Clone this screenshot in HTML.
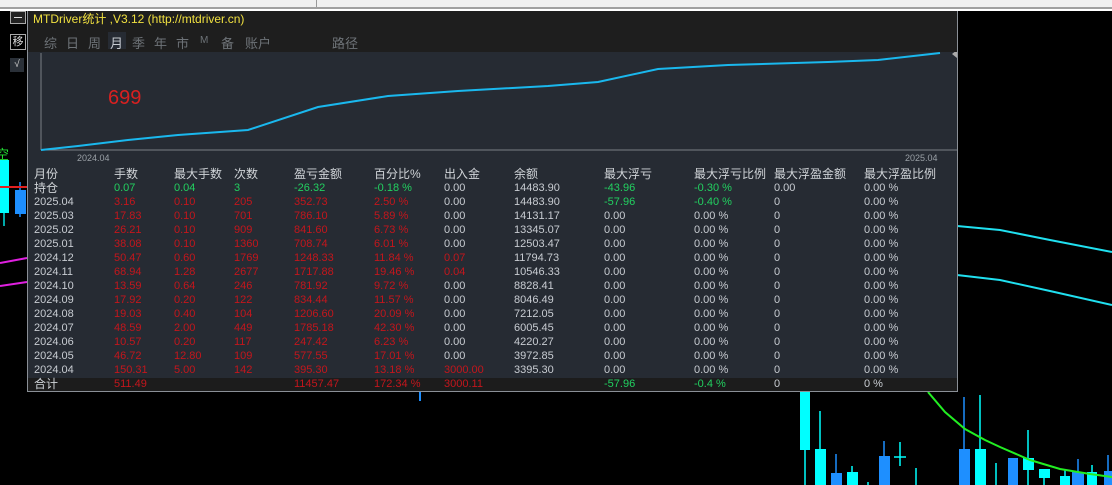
<!DOCTYPE html>
<html><head><meta charset="utf-8"><style>
html,body{margin:0;padding:0;width:1112px;height:485px;overflow:hidden;background:#000;font-family:"Liberation Sans","Noto Sans CJK SC",sans-serif;}
.abs{position:absolute;}
#top{left:0;top:0;width:1112px;height:7px;background:#f0f0f0;}
#top2{left:0;top:7px;width:1112px;height:2px;background:#a0a0a0;}
#top3{left:0;top:9px;width:1112px;height:2px;background:#fff;}
#panel{left:27px;top:11px;width:929px;height:380px;background:#262b33;border:1px solid #8a8f96;border-top:none;}
#head{left:0;top:0;width:929px;height:41px;background:#1e1e1e;}
.t{position:absolute;font-size:11px;white-space:nowrap;line-height:13px;}
.h{font-size:12px;color:#d0d4d8;}
.g{color:#c8ccd2;} .r{color:#c4161c;} .gr{color:#22d060;}
.tab{position:absolute;top:22px;font-size:13px;color:#6e7378;}
</style></head><body>
<div class="abs" id="top"></div><div class="abs" id="top2"></div><div class="abs" id="top3"></div>
<div class="abs" style="left:316px;top:0;width:1px;height:7px;background:#999"></div>
<!-- left buttons -->
<div class="abs" style="left:10px;top:11px;width:14px;height:11px;border:1px solid #aaa;background:#222"><div style="margin:5px 3px;height:1px;background:#ddd"></div></div>
<div class="abs" style="left:10px;top:34px;width:14px;height:14px;border:1px solid #aaa;color:#ddd;font-size:11px;line-height:14px;text-align:center">移</div>
<div class="abs" style="left:10px;top:58px;width:14px;height:14px;background:#2a3038;color:#ccc;font-size:10px;line-height:14px;text-align:center">√</div>
<div class="abs" style="left:-4px;top:144px;color:#22dd33;font-size:13px">空</div>
<svg class="abs" style="left:0;top:0" width="1112" height="485">
<rect x="0" y="160" width="9" height="53" fill="#00ffff"/><line x1="4" y1="213" x2="4" y2="226" stroke="#00e0e0" stroke-width="1.5"/>
<line x1="20" y1="182" x2="20" y2="217" stroke="#1e8fff" stroke-width="1.5"/><rect x="15" y="190" width="11" height="24" fill="#1e8fff"/>
<line x1="0" y1="187" x2="27" y2="187" stroke="#e02020" stroke-width="2"/>
<line x1="0" y1="263" x2="27" y2="258" stroke="#e020e0" stroke-width="2"/>
<line x1="0" y1="286" x2="27" y2="282" stroke="#e020e0" stroke-width="2"/>
<polyline points="957,226 1000,230 1050,240 1112,252" fill="none" stroke="#20e0f0" stroke-width="2"/>
<polyline points="957,275 1000,280 1050,291 1112,305" fill="none" stroke="#20e0f0" stroke-width="2"/>
<line x1="420" y1="392" x2="420" y2="401" stroke="#1e8fff" stroke-width="2"/>
<g stroke-width="1.5">
<line x1="805" y1="392" x2="805" y2="485" stroke="#00ffff"/><rect x="800" y="392" width="10" height="58" fill="#00ffff"/>
<line x1="820" y1="411" x2="820" y2="485" stroke="#00ffff"/><rect x="815" y="449" width="11" height="36" fill="#00ffff"/>
<line x1="836" y1="454" x2="836" y2="485" stroke="#1e8fff"/><rect x="831" y="473" width="11" height="12" fill="#1e8fff"/>
<line x1="852" y1="466" x2="852" y2="485" stroke="#00ffff"/><rect x="847" y="472" width="11" height="13" fill="#00ffff"/>
<line x1="868" y1="482" x2="868" y2="485" stroke="#00ffff"/>
<line x1="884" y1="441" x2="884" y2="485" stroke="#1e8fff"/><rect x="879" y="456" width="11" height="29" fill="#1e8fff"/>
<line x1="900" y1="442" x2="900" y2="466" stroke="#00ffff"/><line x1="894" y1="457" x2="906" y2="457" stroke="#00ffff"/>
<line x1="916" y1="468" x2="916" y2="485" stroke="#00ffff"/>
<line x1="964" y1="397" x2="964" y2="485" stroke="#1e8fff"/><rect x="959" y="449" width="11" height="36" fill="#1e8fff"/>
<line x1="980" y1="395" x2="980" y2="485" stroke="#00ffff"/><rect x="975" y="449" width="11" height="36" fill="#00ffff"/>
<line x1="996" y1="463" x2="996" y2="485" stroke="#00ffff"/>
<rect x="1008" y="458" width="10" height="27" fill="#1e8fff"/>
<line x1="1028" y1="430" x2="1028" y2="485" stroke="#00ffff"/><rect x="1023" y="458" width="11" height="12" fill="#00ffff"/>
<line x1="1044" y1="470" x2="1044" y2="485" stroke="#00ffff"/><rect x="1039" y="469" width="11" height="9" fill="#00ffff"/>
<line x1="1065" y1="470" x2="1065" y2="485" stroke="#00ffff"/><rect x="1060" y="476" width="10" height="9" fill="#00ffff"/>
<line x1="1078" y1="459" x2="1078" y2="485" stroke="#1e8fff"/><rect x="1072" y="472" width="12" height="13" fill="#1e8fff"/>
<line x1="1092" y1="465" x2="1092" y2="485" stroke="#00ffff"/><rect x="1087" y="472" width="10" height="13" fill="#00ffff"/>
<line x1="1108" y1="455" x2="1108" y2="485" stroke="#1e8fff"/><rect x="1104" y="471" width="8" height="14" fill="#1e8fff"/>
</g>
<polyline points="928,392 945,412 965,429 985,440 1000,447 1030,460 1060,469 1090,474 1112,477" fill="none" stroke="#22ee22" stroke-width="2"/>
</svg>
<div class="abs" id="panel">
<div class="abs" id="head"></div>
<div class="t" style="left:5px;top:2px;color:#f0e040;font-size:12px">MTDriver统计 ,V3.12 (http://mtdriver.cn)</div>
<div class="tab" style="left:16px">综</div><div class="tab" style="left:38px">日</div><div class="tab" style="left:60px">周</div>
<div class="abs" style="left:80px;top:21px;width:18px;height:17px;background:#262b33"></div>
<div class="tab" style="left:82px;color:#c8ccd2">月</div><div class="tab" style="left:104px">季</div><div class="tab" style="left:126px">年</div><div class="tab" style="left:148px">市</div><div class="tab" style="left:172px;font-size:10px;top:24px">M</div><div class="tab" style="left:193px">备</div><div class="tab" style="left:217px">账户</div><div class="tab" style="left:304px">路径</div>
<svg class="abs" style="left:0;top:41px" width="929" height="110">
<line x1="13" y1="1" x2="13" y2="98" stroke="#7a7f86"/><line x1="13" y1="98" x2="929" y2="98" stroke="#7a7f86"/>
<polyline points="13,98 50,94 100,88 150,83 220,78 290,55 360,44 430,39 520,34 570,30 630,17 700,13 800,10 850,8 912,1" fill="none" stroke="#1ab8ee" stroke-width="2"/>
<path d="M924,2 l5,-4 v8z" fill="#aaa"/>
</svg>
<div class="t" style="left:80px;top:76px;color:#d82020;font-size:20px;line-height:22px">699</div>
<div class="t" style="left:49px;top:141px;color:#9aa0a6;font-size:9px">2024.04</div>
<div class="t" style="left:877px;top:141px;color:#9aa0a6;font-size:9px">2025.04</div>
<div class="abs" style="left:0;top:367px;width:929px;height:13px;background:#1c1c1c"></div>
<div id="tbl"></div>
</div>
<script>
var cols=[6,86,146,206,266,346,416,486,576,666,746,836];
var rows=[
["h","月份","手数","最大手数","次数","盈亏金额","百分比%","出入金","余额","最大浮亏","最大浮亏比例","最大浮盈金额","最大浮盈比例"],
["p","持仓","0.07","0.04","3","-26.32","-0.18 %","0.00","14483.90","-43.96","-0.30 %","0.00","0.00 %"],
["n","2025.04","3.16","0.10","205","352.73","2.50 %","0.00","14483.90","-57.96","-0.40 %","0","0.00 %"],
["n","2025.03","17.83","0.10","701","786.10","5.89 %","0.00","14131.17","0.00","0.00 %","0","0.00 %"],
["n","2025.02","26.21","0.10","909","841.60","6.73 %","0.00","13345.07","0.00","0.00 %","0","0.00 %"],
["n","2025.01","38.08","0.10","1360","708.74","6.01 %","0.00","12503.47","0.00","0.00 %","0","0.00 %"],
["n","2024.12","50.47","0.60","1769","1248.33","11.84 %","0.07","11794.73","0.00","0.00 %","0","0.00 %"],
["n","2024.11","68.94","1.28","2677","1717.88","19.46 %","0.04","10546.33","0.00","0.00 %","0","0.00 %"],
["n","2024.10","13.59","0.64","246","781.92","9.72 %","0.00","8828.41","0.00","0.00 %","0","0.00 %"],
["n","2024.09","17.92","0.20","122","834.44","11.57 %","0.00","8046.49","0.00","0.00 %","0","0.00 %"],
["n","2024.08","19.03","0.40","104","1206.60","20.09 %","0.00","7212.05","0.00","0.00 %","0","0.00 %"],
["n","2024.07","48.59","2.00","449","1785.18","42.30 %","0.00","6005.45","0.00","0.00 %","0","0.00 %"],
["n","2024.06","10.57","0.20","117","247.42","6.23 %","0.00","4220.27","0.00","0.00 %","0","0.00 %"],
["n","2024.05","46.72","12.80","109","577.55","17.01 %","0.00","3972.85","0.00","0.00 %","0","0.00 %"],
["n","2024.04","150.31","5.00","142","395.30","13.18 %","3000.00","3395.30","0.00","0.00 %","0","0.00 %"],
["t","合计","511.49","","","11457.47","172.34 %","3000.11","","-57.96","-0.4 %","0","0 %"]];
var tops=[157,171];for(var i=2;i<15;i++)tops.push(185+(i-2)*14);tops.push(367);
var h="";
rows.forEach(function(r,ri){var k=r[0];for(var c=1;c<r.length;c++){var cl="g";
if(k=="h")cl="h";else if(k=="p"){cl=c==1?"h":(c==7||c==8||c==11||c==12)?"g":"gr";}
else{if(c==1)cl="g";else if(c>=2&&c<=6)cl="r";else if(c==7)cl=(parseFloat(r[c])>0?"r":"g");else if(c==9||c==10)cl=(r[c].charAt(0)=="-"?"gr":"g");else cl="g";
if(k=="t"&&c==1)cl="h";}
var fs=(k=="h"||(c==1&&k!="n"))?"font-size:12px;":"";
h+='<div class="t '+cl+'" style="'+fs+'left:'+cols[c-1]+'px;top:'+tops[ri]+'px">'+r[c]+'</div>';}});
document.getElementById("tbl").innerHTML=h;
</script>
</body></html>
